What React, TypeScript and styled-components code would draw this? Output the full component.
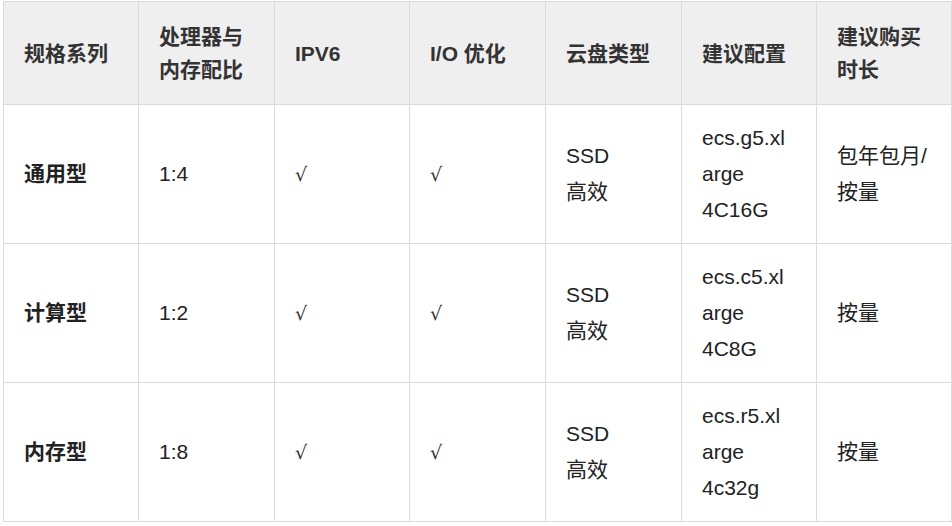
import React from 'react';
import styled, { createGlobalStyle } from 'styled-components';

const GlobalStyle = createGlobalStyle`
	html, body {
		margin: 0;
		padding: 0;
		background: #ffffff;
	}
	body {
		font-family: "Liberation Sans", "Noto Sans CJK SC", sans-serif;
		color: #222;
	}
`

const Page = styled.div`
	padding: 1px 1px 0 3px;
`

const Table = styled.table`
	width: 948px;
	border-collapse: collapse;
	table-layout: fixed;
	font-size: 21px;
`

const Col = styled.col<{ $w: number }>`
	width: ${p => p.$w}px;
`

const HeadCell = styled.th`
	height: 102px;
	padding: 0 20px;
	background: #efefef;
	border: 1px solid #dadada;
	text-align: left;
	vertical-align: middle;
	font-weight: bold;
	color: #333;
	line-height: 33px;
`

const Row = styled.tr`
	height: 139px;
`

const Cell = styled.td<{ $strong?: boolean }>`
	padding: 0 20px;
	border: 1px solid #dadada;
	vertical-align: middle;
	line-height: 36px;
	font-weight: ${p => (p.$strong ? 'bold' : 'normal')};
	color: #222;
`

const Check = styled.span`
	font-family: "DejaVu Serif", "Liberation Serif", serif;
	font-size: 19px;
	font-weight: 300;
	color: #333;
`

const widths = [135, 136, 135, 136, 136, 135, 135]

const headers = [
	['规格系列'],
	['处理器与', '内存配比'],
	['IPV6'],
	['I/O 优化'],
	['云盘类型'],
	['建议配置'],
	['建议购买', '时长'],
]

const rows = [
	{ name: '通用型', ratio: '1:4', config: ['ecs.g5.xl', 'arge', '4C16G'], term: ['包年包月/', '按量'] },
	{ name: '计算型', ratio: '1:2', config: ['ecs.c5.xl', 'arge', '4C8G'], term: ['按量'] },
	{ name: '内存型', ratio: '1:8', config: ['ecs.r5.xl', 'arge', '4c32g'], term: ['按量'] },
]

const lines = (parts: string[]) =>
	parts.map((t, i) => (
		<React.Fragment key={i}>
			{i > 0 && <br />}
			{t}
		</React.Fragment>
	))

export default function App() {
	return (
		<Page>
			<GlobalStyle />
			<Table>
				<colgroup>
					{widths.map((w, i) => <Col key={i} $w={w} />)}
				</colgroup>
				<thead>
					<tr>
						{headers.map((h, i) => (
							<HeadCell key={i}>{lines(h)}</HeadCell>
						))}
					</tr>
				</thead>
				<tbody>
					{rows.map((row, index) => (
						<Row key={index}>
							<Cell $strong>{row.name}</Cell>
							<Cell>{row.ratio}</Cell>
							<Cell><Check>√</Check></Cell>
							<Cell><Check>√</Check></Cell>
							<Cell>{lines(['SSD', '高效'])}</Cell>
							<Cell>{lines(row.config)}</Cell>
							<Cell>{lines(row.term)}</Cell>
						</Row>
					))}
				</tbody>
			</Table>
		</Page>
	)
}
